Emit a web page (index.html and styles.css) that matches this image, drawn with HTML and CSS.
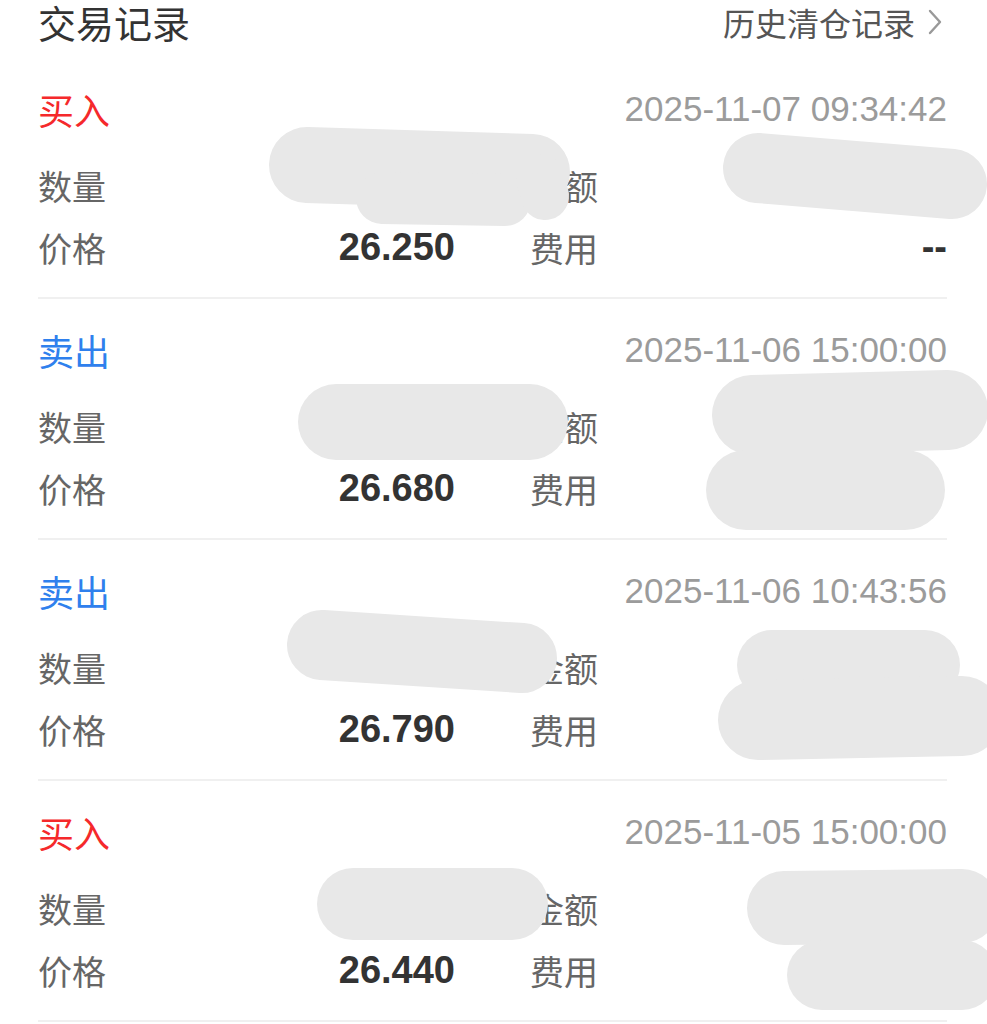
FILE: index.html
```html
<!DOCTYPE html>
<html>
<head>
	<meta charset="utf-8">
	<title>交易记录</title>
	<link rel="stylesheet" href="styles.css">
</head>
<body>
<div class="page">
	<header class="top">
		<h1>交易记录</h1>
		<a class="history">历史清仓记录
			<svg class="chev" width="20" height="28" viewBox="0 0 20 28"><path d="M5 3 L15 14 L5 25" fill="none" stroke="#999" stroke-width="2.4" stroke-linecap="round" stroke-linejoin="round"/></svg>
		</a>
	</header>

	<div class="record">
		<div class="rec-head">
			<span class="side buy">买入</span>
			<span class="time">2025-11-07 09:34:42</span>
		</div>
		<div class="rec-grid">
			<span class="lbl">数量</span><span class="val"></span>
			<span class="lbl2">成交金额</span><span class="val2"></span>
			<span class="lbl">价格</span><span class="val">26.250</span>
			<span class="lbl2">费用</span><span class="val2">--</span>
		</div>
	</div>

	<div class="record">
		<div class="rec-head">
			<span class="side sell">卖出</span>
			<span class="time">2025-11-06 15:00:00</span>
		</div>
		<div class="rec-grid">
			<span class="lbl">数量</span><span class="val"></span>
			<span class="lbl2">成交金额</span><span class="val2"></span>
			<span class="lbl">价格</span><span class="val">26.680</span>
			<span class="lbl2">费用</span><span class="val2"></span>
		</div>
	</div>

	<div class="record">
		<div class="rec-head">
			<span class="side sell">卖出</span>
			<span class="time">2025-11-06 10:43:56</span>
		</div>
		<div class="rec-grid">
			<span class="lbl">数量</span><span class="val"></span>
			<span class="lbl2">成交金额</span><span class="val2"></span>
			<span class="lbl">价格</span><span class="val">26.790</span>
			<span class="lbl2">费用</span><span class="val2"></span>
		</div>
	</div>

	<div class="record">
		<div class="rec-head">
			<span class="side buy">买入</span>
			<span class="time">2025-11-05 15:00:00</span>
		</div>
		<div class="rec-grid">
			<span class="lbl">数量</span><span class="val"></span>
			<span class="lbl2">成交金额</span><span class="val2"></span>
			<span class="lbl">价格</span><span class="val">26.440</span>
			<span class="lbl2">费用</span><span class="val2"></span>
		</div>
	</div>

	<!-- redaction scribbles over the hidden amounts -->
	<svg class="scribble" width="987" height="1024" viewBox="0 0 987 1024">
		<g fill="none" stroke="#e8e8e8" stroke-linecap="round" stroke-linejoin="round">
			<path d="M307 165 L532 172" stroke-width="76"/>
			<path d="M382 198 L505 200" stroke-width="52"/>
			<path d="M540 178 L545 196" stroke-width="48"/>
			<path d="M758 168 L952 184" stroke-width="70"/>

			<path d="M336 422 L530 422" stroke-width="76"/>
			<path d="M752 415 L948 410" stroke-width="80"/>
			<path d="M746 490 L905 490" stroke-width="80"/>

			<path d="M322 645 L522 658" stroke-width="70"/>
			<path d="M772 665 L925 665" stroke-width="70"/>
			<path d="M758 720 L962 716" stroke-width="80"/>

			<path d="M353 904 L512 904" stroke-width="72"/>
			<path d="M784 908 L962 906" stroke-width="74"/>
			<path d="M822 975 L962 975" stroke-width="70"/>
		</g>
	</svg>
</div>
</body>
</html>
```

FILE: styles.css
```css
body {
	margin: 0;
	background: #fff;
	font-family: "Liberation Sans", "Noto Sans CJK SC", sans-serif;
}

.page {
	position: relative;
	width: 987px;
	overflow: hidden;
	padding: 0 40px 0 38px;
	box-sizing: border-box;
}

.top {
	display: flex;
	justify-content: space-between;
	align-items: center;
	height: 44px;
	margin-bottom: 14px;
}

.top h1 {
	margin: 0;
	font-family: "Noto Sans CJK SC", sans-serif;
	font-size: 38px;
	font-weight: 400;
	color: #333;
	line-height: 40px;
}

.history {
	display: flex;
	align-items: center;
	font-family: "Noto Sans CJK SC", sans-serif;
	font-size: 32px;
	color: #555;
	line-height: 40px;
}

.chev {
	margin-left: 10px;
	margin-right: 2px;
}

.record {
	padding: 21px 0 19px;
	border-bottom: 2px solid #f0f0f0;
}

.rec-head {
	display: flex;
	justify-content: space-between;
	align-items: center;
	height: 60px;
	margin-bottom: 15px;
}

.side {
	font-family: "Noto Sans CJK SC", sans-serif;
	font-size: 36px;
}

.buy {
	color: #f5292b;
}

.sell {
	color: #2f80ed;
}

.time {
	font-size: 35px;
	color: #9b9b9b;
}

.rec-grid {
	display: grid;
	grid-template-columns: 117px 300px 143px 1fr;
	grid-auto-rows: 62px;
	align-items: center;
}

.lbl, .lbl2 {
	font-family: "Noto Sans CJK SC", sans-serif;
	font-size: 34px;
	color: #666;
}

.lbl2 {
	text-align: right;
}

.val, .val2 {
	text-align: right;
	font-size: 38px;
	font-weight: 700;
	color: #333;
}

.scribble {
	position: absolute;
	top: 0;
	left: 0;
	pointer-events: none;
}
```
